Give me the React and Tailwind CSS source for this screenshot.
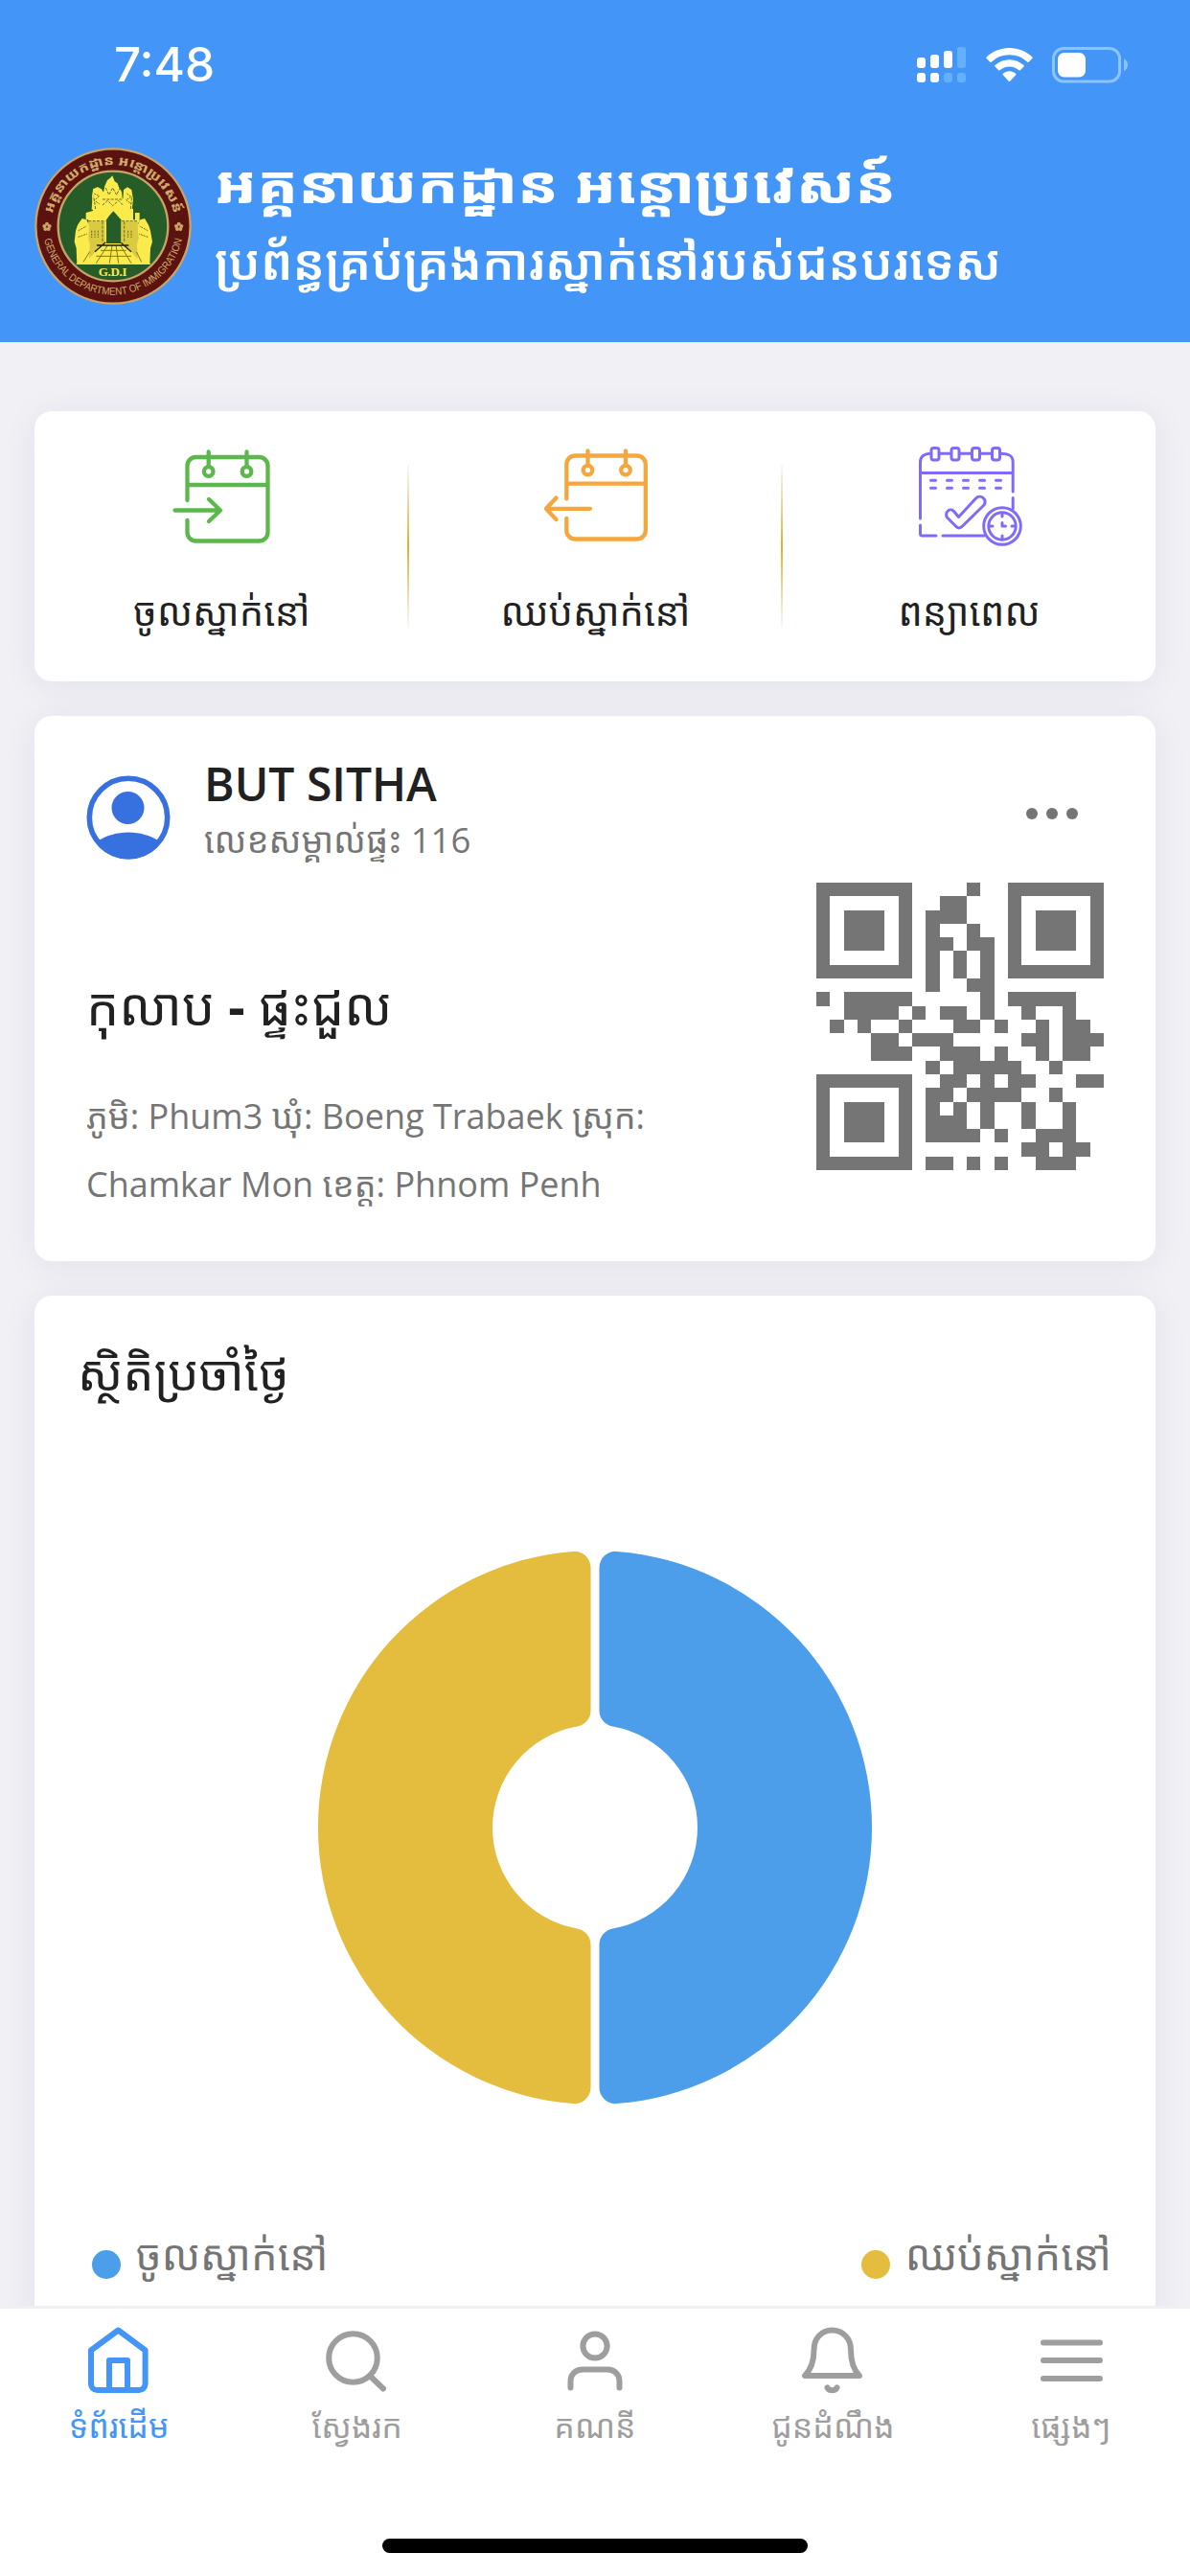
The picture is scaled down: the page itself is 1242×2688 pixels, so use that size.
const KH = "font-['Open_Sans','Noto_Sans_Khmer','Khmer_OS',sans-serif]";

/* ---------- status bar ---------- */
function Signal() {
  return (
    <svg width="52" height="38" viewBox="0 0 52 38" fill="#fff">
      <rect x="0" y="11" width="9" height="11" rx="3" />
      <rect x="14" y="8" width="9" height="14" rx="3" />
      <rect x="28" y="4" width="9" height="18" rx="3" />
      <rect x="42" y="0" width="9" height="22" rx="3" fill="#64b1fb" />
      <rect x="0" y="27" width="9" height="10" rx="3" />
      <rect x="14" y="27" width="9" height="10" rx="3" />
      <rect x="28" y="27" width="9" height="10" rx="3" fill="#64b1fb" />
      <rect x="42" y="27" width="9" height="10" rx="3" fill="#64b1fb" />
    </svg>
  );
}

function Wifi() {
  return (
    <svg width="49" height="36" viewBox="0 0 49 36" fill="#fff">
      <path d="M24.500 0C33.500 0 42 3.500 48.300 9.500a1 1 0 0 1 0 1.500l-3.600 3.700a1 1 0 0 1-1.400 0A27 27 0 0 0 24.500 7.300 27 27 0 0 0 5.700 14.700a1 1 0 0 1-1.400 0L.7 11a1 1 0 0 1 0-1.500C7 3.500 15.500 0 24.500 0z" />
      <path d="M24.500 12.200c5.700 0 11 2.200 15 5.900a1 1 0 0 1 0 1.500l-3.700 3.700a1 1 0 0 1-1.400 0 14.500 14.500 0 0 0-19.800 0 1 1 0 0 1-1.400 0l-3.700-3.700a1 1 0 0 1 0-1.500c4-3.700 9.300-5.900 15-5.900z" />
      <path d="M24.500 24.200c2.600 0 4.900.9 6.700 2.500a1 1 0 0 1 0 1.500l-6 6.500a1 1 0 0 1-1.400 0l-6-6.500a1 1 0 0 1 0-1.500c1.800-1.600 4.100-2.500 6.700-2.500z" />
    </svg>
  );
}

function Battery() {
  return (
    <svg width="80" height="38" viewBox="0 0 80 38">
      <rect x="1.500" y="1.500" width="69" height="34.500" rx="10.500" fill="none" stroke="#8cc4fb" strokeWidth="3" />
      <rect x="6" y="6" width="29" height="25.500" rx="6.500" fill="#fff" />
      <path d="M75 12.500c2.600 1 4 3.500 4 6.300s-1.400 5.300-4 6.300z" fill="#8cc4fb" />
    </svg>
  );
}

/* ---------- department emblem ---------- */
function Emblem() {
  return (
    <svg width="164" height="164" viewBox="49 70 492 492" className="shrink-0">
      <defs>
        <path id="arcTop" d="M104 280 A195 195 0 0 1 486 280" />
        <path id="arcBottom" d="M78 352 A221 221 0 0 0 512 352" />
      </defs>
      <circle cx="295" cy="316" r="242" fill="#5c130f" stroke="#c9a468" strokeWidth="7" />
      <circle cx="295" cy="316" r="172" fill="#265c28" stroke="#c9a468" strokeWidth="7" />
      <text fill="#d0ab6c" fontSize="40" fontWeight="800" className={KH}>
        <textPath href="#arcTop" startOffset="4" textLength="526" lengthAdjust="spacingAndGlyphs">អគ្គនាយកដ្ឋាន អន្តោប្រវេសន៍</textPath>
      </text>
      <text fill="#d0ab6c" fontSize="33" className="font-['Liberation_Sans',sans-serif]">
        <textPath href="#arcBottom" startOffset="5" textLength="600" lengthAdjust="spacingAndGlyphs">GENERAL DEPARTMENT OF IMMIGRATION</textPath>
      </text>
      {[88, 501].map((x) => (
        <g key={x} fill="#c9a468">
          <circle cx={x} cy="309" r="6" />
          <circle cx={x - 8} cy="316" r="6" />
          <circle cx={x + 8} cy="316" r="6" />
          <circle cx={x - 5} cy="325" r="6" />
          <circle cx={x + 5} cy="325" r="6" />
        </g>
      ))}
      {/* temple gate */}
      <g fill="#fbea4b">
        <path d="M293 158l7 18 9 6 5 14 8 12 2 20 8 6 2 24 24 4v34h16v132H218V296h-8v-22l22-6 0-26-3-20 4-20 14-8 12 6 6 10 4-20 8-18 8-6z" />
        <path d="M232 200l14-6 12 10 2 60h-32zM328 202l12-8 13 8 5 30-4 34h-30zM364 274h14v30h-14z" />
        <path d="M252 371h86l76 64H178z" />
      </g>
      <path d="M218 302v70l-12 60h34l30-58V302zM374 302v70l12 60h-34l-30-58V302z" fill="#d9ca42" />
      <g fill="#fbea4b">
        <path d="M178 330l6-18 14-20 14 4 8 18-2 40 4 20-2 45 14 4-8 12h-44l-2-50-6-20zM412 330l-6-18-12-20-14 4-8 18 2 40-4 20 2 45-14 4 8 12h44l2-50 6-20z" />
        <path d="M262 371h66l60 64H204z" />
      </g>
      <path d="M274 370v-74l10-14 12-13 12 13 12 14v74z" fill="#265c28" />
      <g fill="none" stroke="#6d681f" strokeWidth="3">
        <path d="M218 300h54M322 300h52M262 302v66M330 302v66M240 262l-6-40M350 262l4-40M272 196l10 22 12-22 12 22 10-20M262 232h64M262 250l16-14 16 16 18-16 14 14" strokeDasharray="9 4" />
        <path d="M228 330v22M238 330v22M248 330v22M342 330v22M352 330v22M186 330l26-14M186 350l28-10M404 330l-26-14M404 350l-28-10M236 214l16 8-16 14 16 10M338 214l14 10-16 10 16 12" strokeDasharray="6 3" />
        <path d="M278 376l-36 56M292 376l-8 56M304 376l8 56M318 376l34 56M256 392h80M242 410h110M222 396l-20 32M368 396l16 32" stroke="#7c7620" />
      </g>
      <path d="M238 396l34-30M352 396l-32-28M244 376h100" stroke="#16250f" strokeWidth="4" />
      <text x="294" y="472" textAnchor="middle" fontSize="39" fontWeight="700" fill="#fbea4b" textLength="90" className="font-['Liberation_Serif',serif]">G.D.I</text>
    </svg>
  );
}

/* ---------- quick action icons ---------- */
function StayIn() {
  return (
    <svg width="104" height="106" viewBox="180 466 104 106" fill="none" stroke="#5cb84c" strokeWidth="4.300" strokeLinecap="round" strokeLinejoin="round">
      <path d="M195.500 523v-36c0-5 4-9 9-9h66c5 0 9 4 9 9v69.500c0 5-4 9-9 9h-66c-5 0-9-4-9-9V544M195.500 507h84M217.700 472.500v15M257.500 472.500v15" />
      <circle cx="217.700" cy="493" r="4.800" />
      <circle cx="257.500" cy="493" r="4.800" />
      <path d="M182.500 533.500h47M218 522l12 11.500L218 545" />
    </svg>
  );
}

function StayOut() {
  return (
    <svg width="112" height="106" viewBox="566 466 112 106" fill="none" stroke="#f5a63d" strokeWidth="4.300" strokeLinecap="round" strokeLinejoin="round">
      <path d="M591.300 521.500v-36c0-5 4-9 9-9h64.500c5 0 9 4 9 9v69c0 5-4 9-9 9h-64.500c-5 0-9-4-9-9V542M591.300 505.700h82.500M613.500 471.500v15M653 471.500v15" />
      <circle cx="613.500" cy="491.600" r="4.800" />
      <circle cx="653" cy="491.600" r="4.800" />
      <path d="M616 531.800h-46M580.500 520.500L570 531.800l10.500 11.300" />
    </svg>
  );
}

function Extend() {
  return (
    <svg width="110" height="106" viewBox="957 466 110 106" fill="none" stroke="#7f6bf8" strokeWidth="3" strokeLinecap="round" strokeLinejoin="round">
      {[976, 997, 1018.5, 1039.5].map((x) => (
        <rect key={x} x={x - 4} y="468.500" width="8" height="12.500" rx="2.500" />
      ))}
      <path d="M971 474.200c-6 0-10.500 3-10.500 9V542M981 474.200h11M1002 474.200h11.500M1023.500 474.200h11M1044.500 474.200c8 0 12.700 2 12.700 9V514M960.500 494.500h96.700M1057.200 520.500V532M960.500 549v9c0 1.300.7 2 2 2H977M984 560h43" />
      {[974, 991, 1008, 1025, 1042].map((x) => (
        <path key={x} d={`M${x - 2.5} 502.300h5M${x - 2.5} 510.300h5`} />
      ))}
      <path d="M1000.500 540.500l18-19.500c5-5 12 1 8.500 7l-22.500 22c-2.500 2.500-5 2.500-7 0L988.500 541c-3-6 3.500-11 7.500-6z" />
      <circle cx="1046" cy="550" r="19.300" fill="#fff" />
      <circle cx="1046" cy="550" r="14.200" />
      <path d="M1046 537.500v2.500M1046 560v2.500M1034 550h2M1056 550h2M1046 546.500v3.500h3.500" />
    </svg>
  );
}

function Action({ icon, label }) {
  return (
    <div className="flex w-[390px] flex-col items-center pt-9 pl-px">
      {icon}
      <span className={"mt-[31px] block h-[72px] whitespace-nowrap text-[40px] leading-[72px] text-[#212121] " + KH}>{label}</span>
    </div>
  );
}

function Divider() {
  return <div className="-mx-px mt-14 h-[170px] w-[2px] shrink-0 bg-linear-to-b from-[#b9bcc4]/10 via-[#dfb02c] to-[#b9bcc4]/10" />;
}

/* ---------- house card ---------- */
const QR = [
  "#######....#..#######",
  "#.....#..##...#.....#",
  "#.###.#.###...#.###.#",
  "#.###.#.#..#..#.###.#",
  "#.###.#.##.##.#.###.#",
  "#.....#.#.#.#.#.....#",
  "#######.#.#.#.#######",
  "........#..##........",
  "#.#####.....#.#####..",
  "..####.#.##.#..#..#..",
  ".#.#..#...##.#..#.##.",
  "....##.###.....##.###",
  "....###..###.#..#.##.",
  "........#.#####..#...",
  "#######..##.#.##...##",
  "#.....#.##.####..#...",
  "#.###.#.#.#.#..#..#..",
  "#.###.#.###.#..#..#..",
  "#.###.#.####.#..###..",
  "#.....#........##.##.",
  "#######.##.#.#..###..",
];

function QrCode() {
  const d = QR.flatMap((row, y) => [...row.matchAll(/#+/g)].map((m) => `M${m.index} ${y}h${m[0].length}v1h-${m[0].length}z`)).join("");
  return (
    <svg width="300" height="300" viewBox="0 0 21 21" shapeRendering="crispEdges">
      <path d={d} fill="#757575" />
    </svg>
  );
}

function Avatar() {
  return (
    <svg width="88" height="88" viewBox="0 0 88 88">
      <defs>
        <clipPath id="face"><circle cx="44" cy="44" r="43.500" /></clipPath>
      </defs>
      <circle cx="44" cy="44" r="40.700" fill="none" stroke="#3771e0" strokeWidth="5.600" />
      <circle cx="43.500" cy="34" r="17" fill="#3771e0" />
      <path d="M13 68c8-5 19-8.500 31-8.500S67 63 75 68l-4 20H15z" fill="#3771e0" clipPath="url(#face)" />
    </svg>
  );
}

/* ---------- chart ---------- */
function Donut() {
  const half =
    "M4.500 -271.150A17 17 0 0 1 22.840 -288.100A289 289 0 0 1 22.840 288.100A17 17 0 0 1 4.500 271.150V122.120A17 17 0 0 1 18.550 105.380A107 107 0 0 0 18.550 -105.380A17 17 0 0 1 4.500 -122.120Z";
  return (
    <svg width="580" height="580" viewBox="-290 -290 580 580">
      <path d={half} fill="#4c9dea" />
      <path d={half} fill="#e4bd3f" transform="scale(-1 1)" />
    </svg>
  );
}

/* ---------- bottom navigation ---------- */
const NAV = [
  { label: "ទំព័រដើម", active: true, icon: <path d="M7 27.500L35.400 6.500 63.600 27.500V62.500a6.500 6.500 0 0 1-6.500 6.500H13.500A6.500 6.500 0 0 1 7 62.500zM26 69V38h19v31" /> },
  { label: "ស្វែងរក", icon: <><circle cx="31.500" cy="35.500" r="25.300" /><path d="M49.500 54.500L63 67.500" /></> },
  { label: "គណនី", icon: <><circle cx="36" cy="23" r="12.600" /><path d="M10.500 66.500v-7c0-7 5.500-12 12.500-12h26c7 0 12.500 5 12.500 12v7" /></> },
  { label: "ជូនដំណឹង", icon: <><path d="M35.500 6.500C24.500 6.500 16.500 15 16.500 27c0 13-3 20.500-9.500 27h57c-6.500-6.500-9-14-9-27 0-12-8.500-20.500-19.500-20.500z" /><path d="M30.500 66.500c2 3.700 8 3.700 10 0" /></> },
  { label: "ផ្សេងៗ", icon: <path d="M7 19.500h59M7 38h59M7 57h59" /> },
];

function NavItem({ label, icon, active }) {
  return (
    <div className={"flex flex-1 flex-col items-center pt-4 " + (active ? "text-[#4395f7]" : "text-[#9e9e9e]")}>
      <svg width="72" height="80" viewBox="0 0 72 80" fill="none" stroke="currentColor" strokeWidth="6" strokeLinecap="round" strokeLinejoin="round">{icon}</svg>
      <span className={"-mt-px block h-14 whitespace-nowrap text-[34px] leading-[54px] " + KH}>{label}</span>
    </div>
  );
}

function Legend({ color, label }) {
  return (
    <div className="flex items-center gap-4">
      <span className={"mt-5 size-[30px] rounded-full " + color} />
      <span className={"whitespace-nowrap text-[43.5px] leading-[72px] text-[#757575] " + KH}>{label}</span>
    </div>
  );
}

const CARD = "rounded-[18px] bg-white shadow-[0_4px_36px_rgba(40,40,90,0.07)]";

export default function App() {
  return (
    <div className={"flex h-[2688px] w-[1242px] flex-col overflow-hidden bg-[#f0f0f5] " + KH}>
      <header className="h-[357px] shrink-0 bg-[#4395f7] text-white">
        <div className="flex h-[136px] items-center pr-[64px] pl-[119px]">
          <span className="mr-auto font-['Inter',sans-serif] text-[49.5px] leading-none font-medium">7:48</span>
          <div className="flex items-center gap-5">
            <Signal />
            <Wifi />
            <Battery />
          </div>
        </div>
        <div className="flex pl-9 pt-[18px]">
          <Emblem />
          <div className="ml-6 flex flex-col">
            <h1 className="h-[82px] w-max origin-left scale-x-[1.155] whitespace-nowrap text-[54px] leading-[74px] font-extrabold">អគ្គនាយកដ្ឋាន អន្តោប្រវេសន៍</h1>
            <h2 className="h-[82px] whitespace-nowrap text-[51px] leading-[72px] font-semibold">ប្រព័ន្ធគ្រប់គ្រងការស្នាក់នៅរបស់ជនបរទេស</h2>
          </div>
        </div>
      </header>

      <main className="flex h-[2049px] shrink-0 flex-col gap-9 overflow-hidden px-9 pt-[72px]">
        <section className={"flex h-[282px] shrink-0 " + CARD}>
          <Action icon={<StayIn />} label="ចូលស្នាក់នៅ" />
          <Divider />
          <Action icon={<StayOut />} label="ឈប់ស្នាក់នៅ" />
          <Divider />
          <Action icon={<Extend />} label="ពន្យាពេល" />
        </section>

        <section className={"flex h-[569px] shrink-0 justify-between pr-[54px] pl-[54px] " + CARD}>
          <div className="w-[640px]">
            <div className="flex pt-[38px]">
              <div className="pt-6"><Avatar /></div>
              <div className="ml-[35px]">
                <div className="h-[66px] whitespace-nowrap text-[48px] leading-[66px] font-semibold text-[#212121]">BUT SITHA</div>
                <div className="h-[50px] whitespace-nowrap text-[36.5px] leading-[50px] text-[#757575]">លេខសម្គាល់ផ្ទះ 116</div>
              </div>
            </div>
            <div className="mt-[112px] h-[72px] whitespace-nowrap text-[54px] leading-[72px] text-[#212121]">
              កុលាប <span className="font-bold">-</span> ផ្ទះជួល
            </div>
            <p className="mt-[44px] text-[36px] leading-[71px] text-[#757575]">
              ភូមិ: Phum3 ឃុំ: Boeng Trabaek ស្រុក:
              <br />
              Chamkar Mon ខេត្ត: Phnom Penh
            </p>
          </div>
          <div className="flex flex-col items-end">
            <div className="mt-24 mr-[27px] flex gap-[9px]">
              <i className="size-3 rounded-full bg-[#757575]" />
              <i className="size-3 rounded-full bg-[#757575]" />
              <i className="size-3 rounded-full bg-[#757575]" />
            </div>
            <div className="mt-[66px]"><QrCode /></div>
          </div>
        </section>

        <section className={"flex h-[1200px] shrink-0 flex-col pt-12 " + CARD}>
          <h3 className="h-[66px] whitespace-nowrap pl-[45px] text-[51px] leading-[62px] text-[#212121]">ស្ថិតិប្រចាំថ្ងៃ</h3>
          <div className="mt-[151px] flex justify-center"><Donut /></div>
          <div className="mt-[120px] flex justify-between pr-[46px] pl-[60px]">
            <Legend color="bg-[#4c9dea]" label="ចូលស្នាក់នៅ" />
            <Legend color="bg-[#e4bd3f]" label="ឈប់ស្នាក់នៅ" />
          </div>
        </section>
      </main>

      <nav className="flex flex-1 flex-col border-t-3 border-[#efeff4] bg-white">
        <div className="flex">
          {NAV.map((n) => <NavItem key={n.label} {...n} />)}
        </div>
        <div className="mx-auto mt-auto mb-6 h-[15px] w-[444px] rounded-full bg-black" />
      </nav>
    </div>
  );
}
